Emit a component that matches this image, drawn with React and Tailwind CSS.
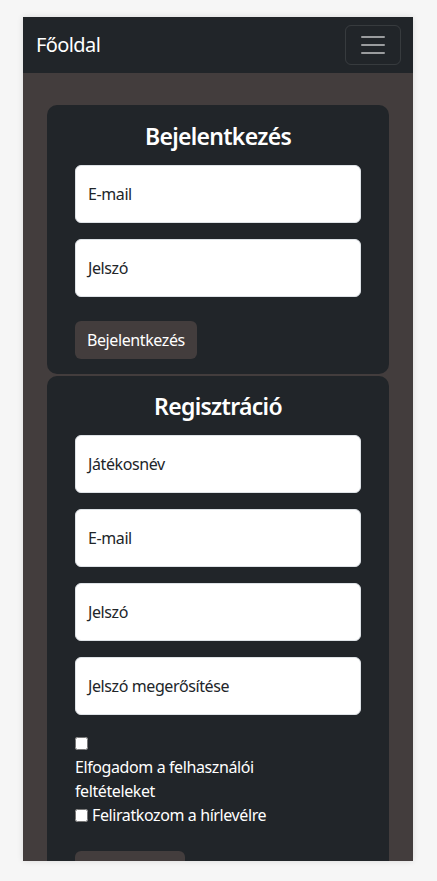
import React from "react";

const font = { fontFamily: '"Noto Sans", "Open Sans", sans-serif' };

function Field({ label }) {
  return (
    <div className="mb-4 flex h-[58px] items-center rounded-[6px] border border-[#dee2e6] bg-white px-3 text-[16px] tracking-[-0.4px] text-[#212529]">
      {label}
    </div>
  );
}

export default function App() {
  return (
    <div className="min-h-[881px] bg-[#f6f6f6] pl-[23px] pt-[17px]" style={font}>
      <div className="flex h-[844px] w-[390px] flex-col overflow-hidden bg-[#433d3d] shadow-[0_0_6px_rgba(0,0,0,0.12)]">
        <nav className="flex h-[56px] shrink-0 items-center justify-between bg-[#212529] pl-[13px] pr-[12px]">
          <span className="text-[20px] tracking-[-0.6px] text-white">Főoldal</span>
          <button className="flex h-[40px] w-[56px] items-center justify-center rounded-[6px] border border-white/10">
            <svg width="30" height="30" viewBox="0 0 30 30">
              <path d="M4 7h22M4 15h22M4 23h22" stroke="rgba(255,255,255,0.55)" strokeWidth="2" strokeLinecap="round" />
            </svg>
          </button>
        </nav>
        <main className="flex flex-col gap-[2px] px-6 pt-8">
          <section className="rounded-[10px] bg-[#212529] px-7 pb-[15px] pt-[17px]">
            <h2 className="mb-[14px] text-center text-[23px] font-semibold leading-[29px] tracking-[-0.7px] text-white">Bejelentkezés</h2>
            <Field label="E-mail" />
            <Field label="Jelszó" />
            <div className="pt-[8px]">
              <button className="h-[38px] rounded-[6px] bg-[#433d3d] px-3 text-[16px] tracking-[-0.4px] text-white">Bejelentkezés</button>
            </div>
          </section>
          <section className="rounded-[10px] bg-[#212529] px-7 pb-[15px] pt-[16px]">
            <h2 className="mb-[14px] text-center text-[23px] font-semibold leading-[29px] tracking-[-0.7px] text-white">Regisztráció</h2>
            <Field label="Játékosnév" />
            <Field label="E-mail" />
            <Field label="Jelszó" />
            <Field label="Jelszó megerősítése" />
            <div className="text-[16px] leading-[24px] tracking-[-0.4px] text-white">
              <div className="flex h-[24px] items-center">
                <input type="checkbox" className="m-0 h-[13px] w-[13px]" />
              </div>
              <div>
                Elfogadom a felhasználói
                <br />
                feltételeket
              </div>
              <div className="flex h-[24px] items-center gap-[4px]">
                <input type="checkbox" className="m-0 h-[13px] w-[13px]" />
                <span>Feliratkozom a hírlevélre</span>
              </div>
            </div>
            <div className="pt-[24px]">
              <button className="h-[38px] rounded-[6px] bg-[#433d3d] px-3 text-[16px] tracking-[-0.4px] text-white">Regisztráció</button>
            </div>
          </section>
        </main>
      </div>
    </div>
  );
}
